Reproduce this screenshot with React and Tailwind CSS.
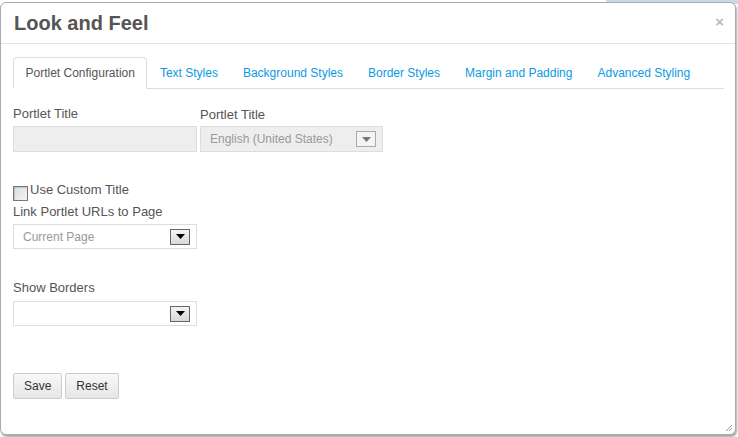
import React from 'react';

const tabs = ['Portlet Configuration', 'Text Styles', 'Background Styles', 'Border Styles', 'Margin and Padding', 'Advanced Styling'];

function Arrow({ disabled }) {
  return (
    <span
      className={`flex items-center justify-center w-[20px] h-[16px] border ${
        disabled ? 'border-[#aaa] bg-[#f4f4f4]' : 'border-[#666] bg-gradient-to-b from-[#f4f4f4] to-[#d8d8d8]'
      }`}
    >
      <svg width="9" height="5" viewBox="0 0 9 5">
        <polygon points="0,0 9,0 4.5,5" fill={disabled ? '#777' : '#000'} />
      </svg>
    </span>
  );
}

function Select({ value, disabled, className = '' }) {
  return (
    <div
      className={`flex items-center justify-between pl-[9px] pr-[6px] border border-[#ddd] ${
        disabled ? 'bg-[#eee]' : 'bg-white'
      } ${className}`}
    >
      <span className="text-[12px] text-[#999] whitespace-nowrap">{value}</span>
      <Arrow disabled={disabled} />
    </div>
  );
}

export default function App() {
  return (
    <div className="relative w-[738px] h-[437px] bg-white font-['Liberation_Sans',Arial,sans-serif] overflow-hidden">
      {/* page behind the dialog */}
      <div className="absolute top-0 right-0 w-[132px] h-[4px] bg-[#c4d9ea]" />
      <div className="absolute left-0 top-[2px] w-[736px] h-[433px] rounded-[6px] border border-[#aaa] bg-white shadow-[1px_2px_2px_rgba(0,0,0,0.35)] flex flex-col">
        {/* header */}
        <div className="flex items-center justify-between h-[41px] px-[13px] border-b border-[#e5e5e5]">
          <h1 className="text-[20px] font-bold text-[#555] leading-none">Look and Feel</h1>
          <span className="text-[#bbb] text-[15px] font-bold leading-none mr-[-2px] mt-[-4px]">×</span>
        </div>

        <div className="px-[12px] pt-[13px]">
          {/* tabs */}
          <div className="flex items-end h-[32px] border-b border-[#ddd] w-[711px]">
            {tabs.map((t, i) =>
              i === 0 ? (
                <div
                  key={t}
                  className="h-[32px] mb-[-1px] px-[11.5px] flex items-center border border-[#ddd] border-b-white rounded-t-[4px] bg-white text-[12px] text-[#555] whitespace-nowrap"
                >
                  {t}
                </div>
              ) : (
                <div key={t} className="h-[31px] px-[12.5px] flex items-center text-[12px] text-[#0a9ae4] whitespace-nowrap">
                  {t}
                </div>
              )
            )}
          </div>

          {/* form */}
          <div className="pt-[17px] text-[13px] text-[#555]">
            <div className="flex gap-[3px]">
              <div className="w-[184px]">
                <div className="h-[16px] leading-[16px]">Portlet Title</div>
                <div className="mt-[4px] h-[26px] bg-[#eee] border border-[#ddd]" />
              </div>
              <div className="w-[183px]">
                <div className="h-[16px] leading-[16px] mt-[1px]">Portlet Title</div>
                <Select value="English (United States)" disabled className="mt-[3px] h-[26px]" />
              </div>
            </div>

            <div className="mt-[30px] flex items-start">
              <span className="mt-[4px] w-[15px] h-[15px] border border-[#777] bg-gradient-to-br from-[#ddd] to-[#f4f4f4] shadow-[inset_1px_1px_1px_rgba(0,0,0,0.15)]" />
              <span className="ml-[2px] leading-[16px]">Use Custom Title</span>
            </div>
            <div className="mt-[3px] leading-[16px]">Link Portlet URLs to Page</div>
            <Select value="Current Page" className="mt-[4px] w-[184px] h-[25px]" />

            <div className="mt-[31px] leading-[16px]">Show Borders</div>
            <Select value="" className="mt-[5px] w-[184px] h-[25px]" />

            <div className="mt-[47px] flex gap-[3px]">
              <button className="h-[26px] px-[10px] border border-[#ccc] rounded-[2px] bg-gradient-to-b from-[#f8f8f8] to-[#e6e6e6] text-[12px] text-[#333]">
                Save
              </button>
              <button className="h-[26px] px-[10px] border border-[#ccc] rounded-[2px] bg-gradient-to-b from-[#f8f8f8] to-[#e6e6e6] text-[12px] text-[#333]">
                Reset
              </button>
            </div>
          </div>
        </div>
        <svg className="absolute right-[2px] bottom-[2px]" width="8" height="8" viewBox="0 0 8 8">
          <line x1="1" y1="7" x2="7" y2="1" stroke="#999" />
          <line x1="4" y1="7" x2="7" y2="4" stroke="#999" />
        </svg>
      </div>
    </div>
  );
}
